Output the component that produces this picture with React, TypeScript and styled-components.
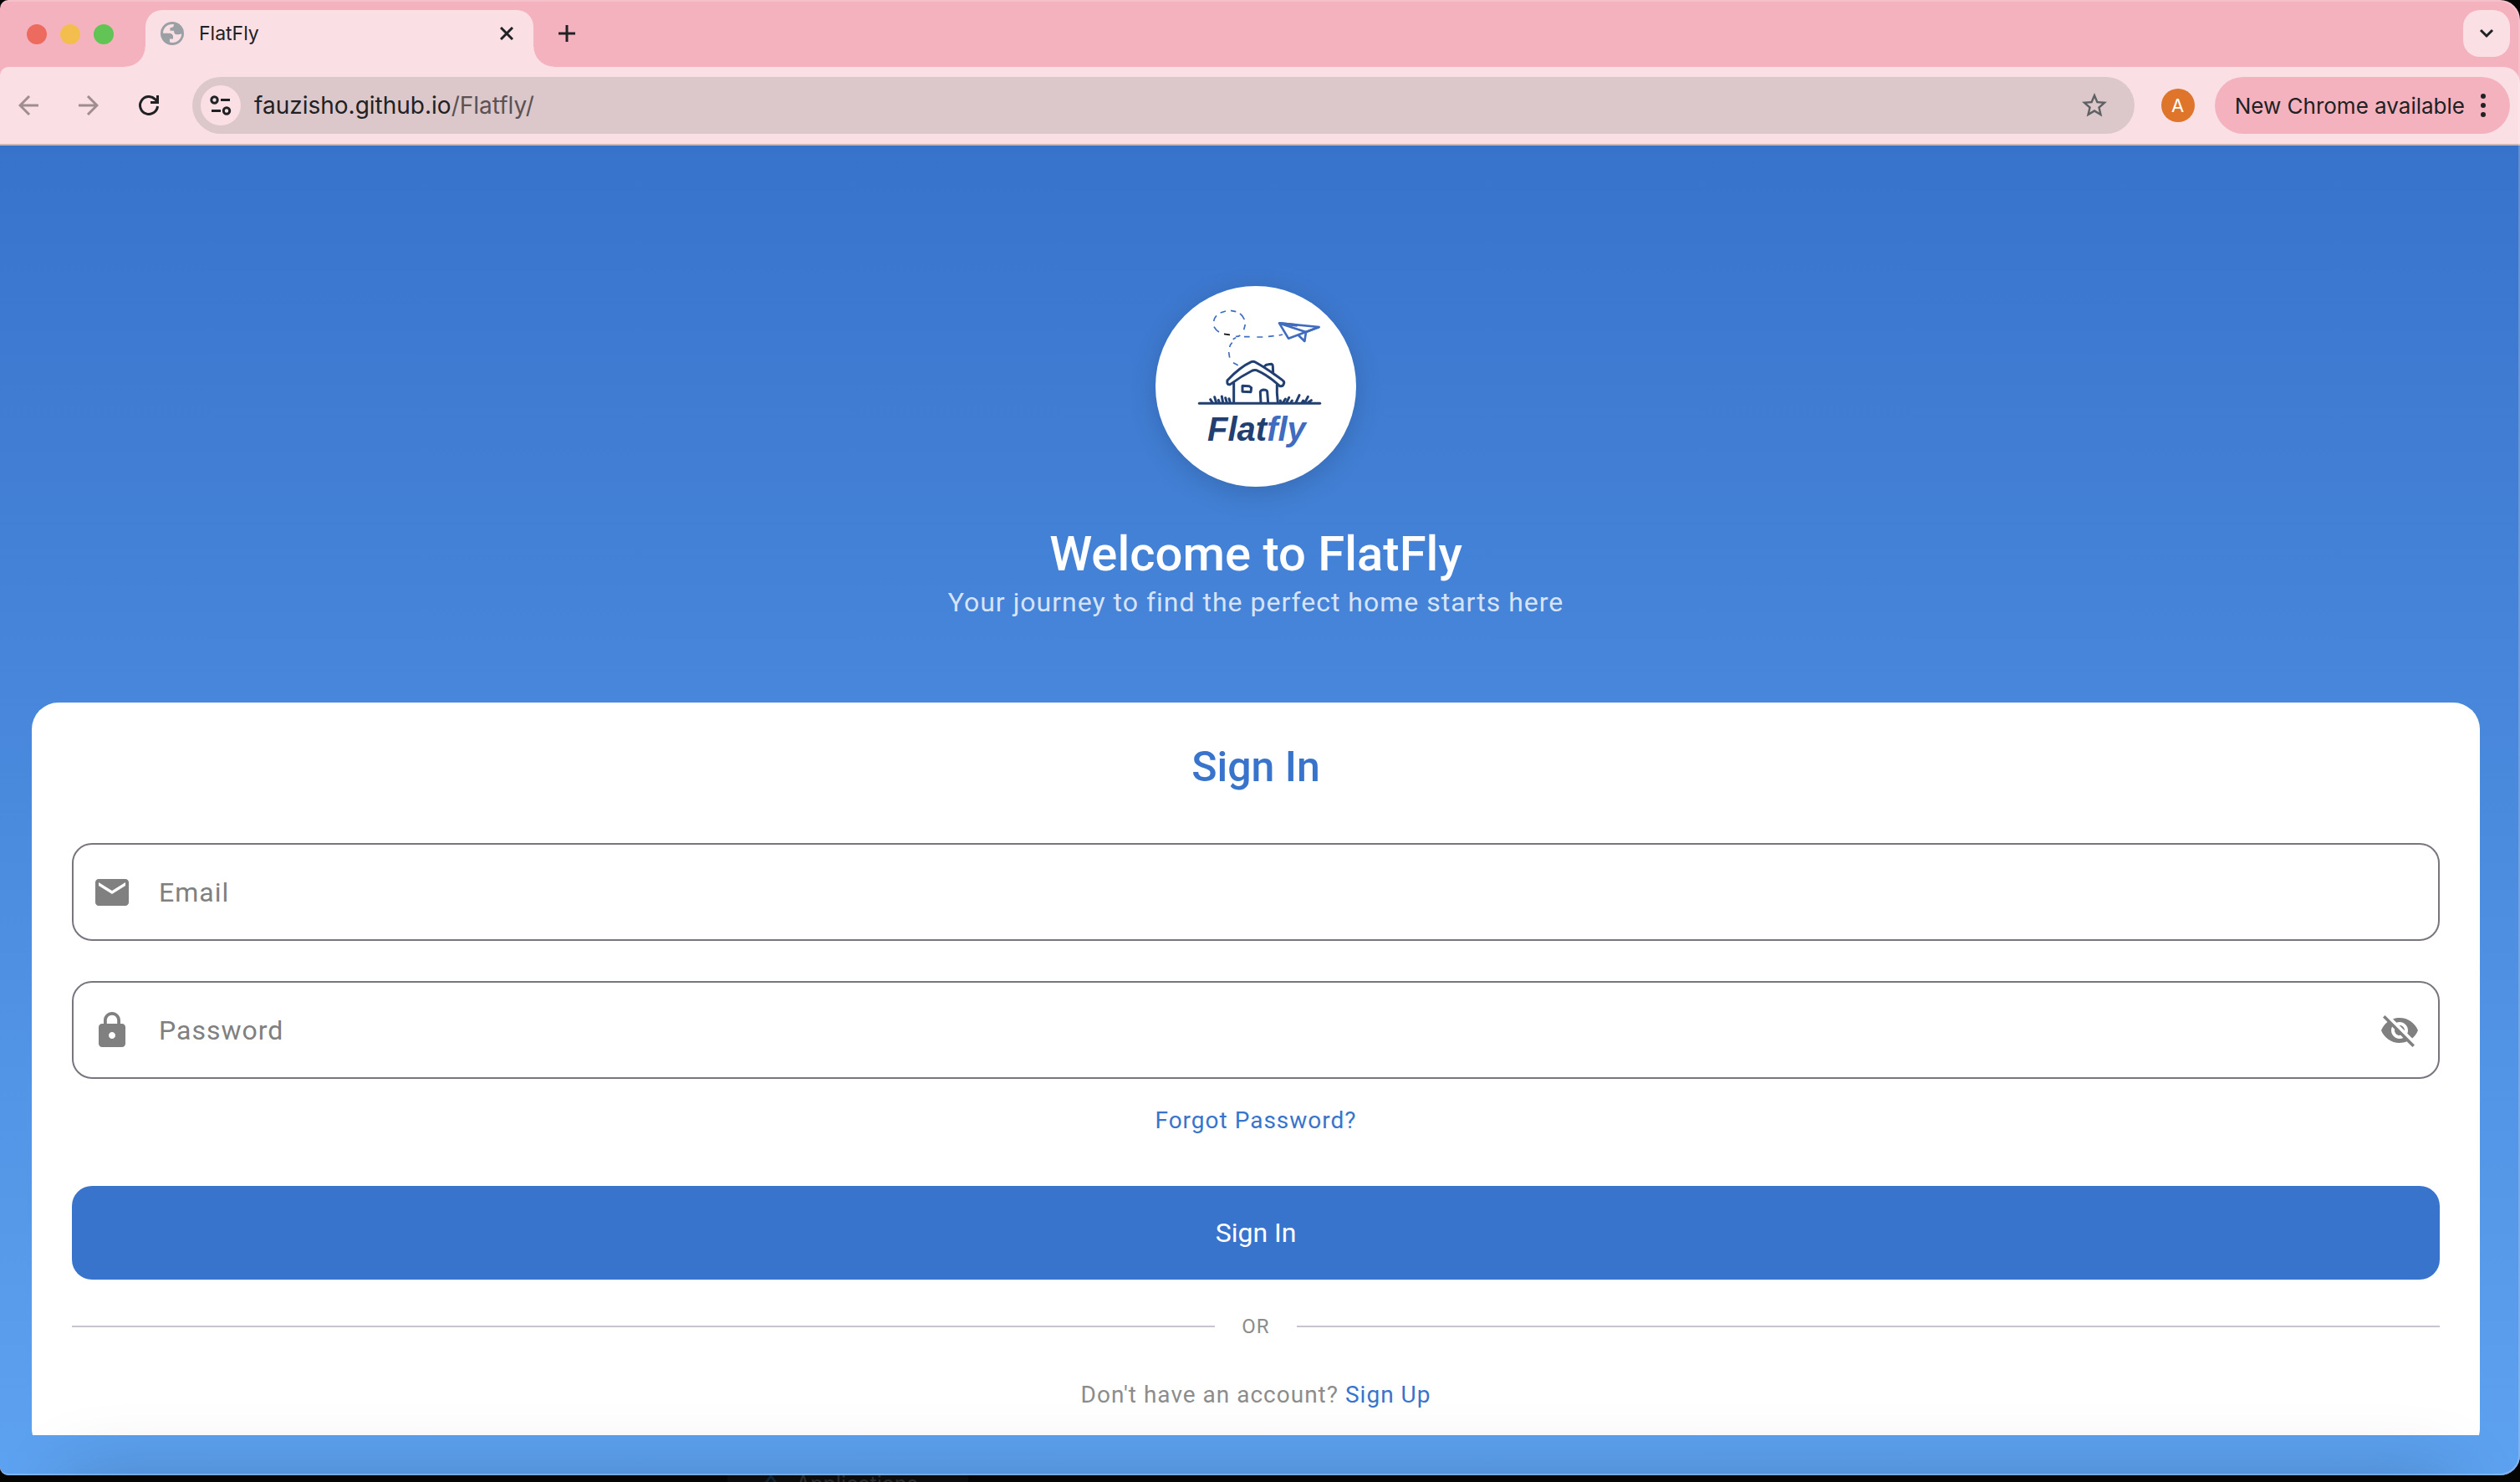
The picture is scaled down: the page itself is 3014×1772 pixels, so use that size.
import React, { useState } from "react";
import styled, { createGlobalStyle } from "styled-components";
import { MdEmail, MdLock, MdVisibilityOff, MdVisibility, MdStarBorder } from "react-icons/md";

const GlobalStyle = createGlobalStyle`
  * { box-sizing: border-box; }
  body { margin: 0; background: #050504; overflow: hidden; }
  button, input { font: inherit; border: 0; padding: 0; background: none; color: inherit; letter-spacing: inherit; }
  button { cursor: pointer; display: flex; align-items: center; justify-content: center; }
  svg { display: block; flex: none; }
`;

const Desktop = styled.div`
  height: 100vh;
  display: flex;
  flex-direction: column;
  overflow: hidden;
`;

const Window = styled.div`
  position: relative;
  flex: 1;
  min-height: 0;
  display: flex;
  flex-direction: column;
  overflow: hidden;
  border-radius: 10px 24px 24px 10px;
  background: #f4b1be;
  font-family: Inter, "Liberation Sans", sans-serif;
  color: #202124;

  &::after {
    content: "";
    position: absolute;
    inset: 0;
    border-radius: inherit;
    border: 2px solid rgba(255, 255, 255, 0.2);
    border-left: 0;
    pointer-events: none;
  }
`;

const DockShade = styled.div`
  position: absolute;
  left: 80px;
  right: 80px;
  top: 100%;
  height: 200px;
  box-shadow: 0 0 88px rgba(0, 0, 0, 0.18);
  pointer-events: none;
`;

const DesktopStrip = styled.div`
  height: 8px;
  padding-left: 870px;
  overflow: hidden;
`;

const DesktopLabel = styled.div`
  display: flex;
  gap: 22px;
  width: 288px;
  padding-left: 44px;
  background: #0c0c0c;
  color: #2b2b2b;
  font: 25px/20px Inter, sans-serif;
`;

const TabStrip = styled.div`
  height: 80px;
  display: flex;
  align-items: flex-end;
  padding: 0 12px 0 32px;
`;

const Lights = styled.div`
  display: flex;
  gap: 16px;
  width: 142px;
  height: 78px;
  align-items: center;
`;

const Light = styled.button<{ $color: string }>`
  width: 24px;
  height: 24px;
  border-radius: 50%;
  background: ${(p) => p.$color};
`;

const Tab = styled.div`
  position: relative;
  display: flex;
  align-items: center;
  width: 464px;
  height: 68px;
  padding: 0 24px 12px 18px;
  border-radius: 20px 20px 0 0;
  background: #fae0e4;
  font-size: 23px;

  &::before,
  &::after {
    content: "";
    position: absolute;
    bottom: 0;
    width: 24px;
    height: 24px;
  }
  &::before {
    right: 100%;
    background: radial-gradient(circle at 0 0, transparent 23px, #fae0e4 24px);
  }
  &::after {
    left: 100%;
    background: radial-gradient(circle at 100% 0, transparent 23px, #fae0e4 24px);
  }
`;

const TabTitle = styled.span`
  flex: 1;
  margin-left: 18px;
`;

const NewTab = styled.button`
  width: 56px;
  height: 56px;
  margin: 0 auto 12px 12px;
`;

const TabSearch = styled.button`
  width: 56px;
  height: 56px;
  margin-bottom: 12px;
  border-radius: 20px;
  background: #fae0e4;
`;

const Toolbar = styled.div`
  height: 94px;
  display: flex;
  align-items: center;
  padding: 0 12px 0 16px;
  border-radius: 10px 20px 0 0;
  border-bottom: 2px solid #cbb6bb;
  background: #fae0e4;
`;

const NavButtons = styled.div`
  display: flex;
  gap: 36px;
  width: 214px;
`;

const NavButton = styled.button<{ $dim?: boolean }>`
  width: 36px;
  height: 36px;
  color: ${(p) => (p.$dim ? "#a08d91" : "#202124")};
`;

const AddressBar = styled.div`
  flex: 1;
  display: flex;
  align-items: center;
  height: 68px;
  padding: 0 30px 0 10px;
  border-radius: 34px;
  background: #dcc7ca;
  font-size: 28px;
  color: #5b5254;
`;

const SiteInfo = styled.button`
  width: 48px;
  height: 48px;
  margin-right: 16px;
  border-radius: 50%;
  background: #fae0e4;
  color: #202124;
`;

const Url = styled.span`
  flex: 1;
`;

const Host = styled.span`
  color: #202124;
`;

const Avatar = styled.button`
  width: 40px;
  height: 40px;
  margin: 0 24px 0 32px;
  border-radius: 50%;
  background: #df742b;
  color: #fff;
  font-size: 22px;
`;

const UpdateChip = styled.button`
  height: 68px;
  padding: 0 28px 0 24px;
  gap: 18px;
  border-radius: 34px;
  background: #f4b1be;
  font-size: 26px;
  white-space: nowrap;
`;

const Page = styled.main`
  flex: 1;
  min-height: 0;
  display: flex;
  padding: 0 48px 48px 38px;
  background: linear-gradient(#3873cb, #5da2f0);
  font-family: Roboto, "Liberation Sans", sans-serif;
`;

const Scroller = styled.div`
  flex: 1;
  overflow: hidden;
  text-align: center;
`;

const Hero = styled.header`
  display: flex;
  flex-direction: column;
  align-items: center;
  padding: 168px 0 100px;
  color: #fff;
`;

const LogoDisc = styled.div`
  width: 240px;
  height: 240px;
  margin-bottom: 42px;
  border-radius: 50%;
  background: #fff;
  box-shadow: 0 8px 32px rgba(0, 0, 0, 0.15);
`;

const Welcome = styled.h1`
  margin: 0;
  font-size: 58px;
  line-height: 76px;
  font-weight: 500;
`;

const Tagline = styled.p`
  margin: 0;
  font-size: 32px;
  line-height: 40px;
  letter-spacing: 1px;
  color: rgba(255, 255, 255, 0.8);
`;

const Card = styled.form`
  padding: 48px;
  border-radius: 32px;
  background: #fff;
`;

const CardTitle = styled.h2`
  margin: 0 0 62px;
  font-size: 50px;
  line-height: 58px;
  font-weight: 500;
  color: #3874cc;
`;

const Field = styled.label`
  display: flex;
  align-items: center;
  height: 117px;
  margin-bottom: 48px;
  padding: 0 22px;
  border: 2px solid #79747e;
  border-radius: 24px;
  color: #808080;

  & + & {
    margin-bottom: 26px;
  }
`;

const FieldInput = styled.input`
  flex: 1;
  height: 100%;
  margin-left: 32px;
  font-size: 32px;
  letter-spacing: 1px;
  outline: none;
  &::placeholder {
    color: #808080;
    opacity: 1;
  }
`;

const Link = styled.a<{ $block?: boolean }>`
  display: ${(p) => (p.$block ? "block" : "inline")};
  color: #3874cc;
  text-decoration: none;
  font-size: 28px;
  line-height: 48px;
  letter-spacing: 1px;
`;

const Submit = styled.button`
  width: 100%;
  height: 112px;
  margin: 54px 0 40px;
  border-radius: 24px;
  background: #3874cc;
  color: #fff;
  font-size: 32px;
`;

const Divider = styled.div`
  display: flex;
  align-items: center;
  gap: 32px;
  margin-bottom: 42px;
  font-size: 24px;
  line-height: 32px;
  letter-spacing: 1px;
  color: #8c8c8c;

  &::before,
  &::after {
    content: "";
    flex: 1;
    height: 2px;
    background: #cac4d0;
  }
`;

const SignUpLine = styled.p`
  margin: 0;
  font-size: 28px;
  line-height: 48px;
  letter-spacing: 1px;
  color: #8c8c8c;
`;

const stroke = {
  fill: "none",
  stroke: "currentColor",
  strokeWidth: 3,
} as const;

function Globe() {
  return (
    <svg width="28" height="28" viewBox="0 0 28 28">
      <circle cx="14" cy="14" r="14" fill="#9aa0a4" />
      <path
        fill="#fae0e4"
        d="M16 3.200 C9 2 3 7 3 13.700 H11 C13.500 14 15 15.500 15 17.500 V20.500 H11 V24.500 C18 26.500 25 22 25.200 14.500 C23 15 22 15.300 19.500 15.300 C17 15 16 13.500 16 10.700 H11.500 V7 C13.500 7 16 6.500 16 3.200 Z"
      />
    </svg>
  );
}

function FlatflyLogo() {
  return (
    <svg width="240" height="240" viewBox="66 66 720 720" role="img" aria-label="Flatfly">
      <g fill="none" stroke="#3f6cbf" strokeWidth="5" strokeLinecap="butt">
        <path d="M275 192 Q277 180 285 172 M299 162 L318 156 M336 154 L355 158 M369 165 Q380 172 385 186 M388 204 L383 223 M276 212 Q282 224 294 231 M354 247 Q362 248 370 243 M384 248 H404 M430 249 H451 M471 247 L491 245 M509 243 L522 240 M354 251 L344 257 M341 269 Q334 276 332 285 M329 303 L332 323 M345 341 L362 350" />
        <path stroke="#111" d="M312 238 L333 241" />
        <g strokeWidth="8" strokeLinejoin="round">
          <path d="M510 199 L653 213 L543 254 Z" />
          <path d="M512 200 L606 231 L653 213 M606 231 L601 264 L576 240" />
        </g>
        <path strokeWidth="10" d="M512 200 L575 207" />
      </g>
      <g fill="none" stroke="#213f70" strokeWidth="9" strokeLinecap="round" strokeLinejoin="round">
        <path d="M324 404 Q370 356 410 338 Q417 335 424 339 Q466 362 522 404 Q530 409 526 417 Q524 427 512 425 Q470 386 428 368 Q421 366 414 369 Q374 389 334 419 Q321 422 324 404 Z" />
        <path d="M347 414 V484 M502 420 V450 L505 484 M457 354 Q462 347 470 347 L483 346 Q487 348 487 354 L488 376" />
        <path d="M378 424 L402 425 L410 431 L408 446 L378 445 Z" />
        <path d="M444 484 L442 446 Q444 439 453 438 Q466 438 467 445 L470 484" />
        <path d="M223 487 H656" />
        <path d="M270 484 L263 473 M284 484 L278 464 M295 484 L292 475 M308 484 L304 462 M322 484 L317 467 M334 484 L330 470 M516 484 L514 477 M524 484 L532 471 M536 484 L545 466 M552 484 L556 477 M570 484 L582 458 M592 484 L596 477 M602 484 L613 463 M614 484 L625 476" />
      </g>
      <text
        x="252"
        y="620"
        fontFamily="Liberation Sans, Arial, sans-serif"
        fontSize="120"
        fontWeight="700"
        fontStyle="italic"
        fill="#213f70"
      >
        Flat<tspan fill="#3f6cbf">fly</tspan>
      </text>
    </svg>
  );
}

function BrowserChrome() {
  return (
    <>
      <TabStrip>
        <Lights>
          <Light $color="#ed6a5e" aria-label="Close window" />
          <Light $color="#f4be4f" aria-label="Minimize window" />
          <Light $color="#61c454" aria-label="Zoom window" />
        </Lights>
        <Tab>
          <Globe />
          <TabTitle>FlatFly</TabTitle>
          <button aria-label="Close tab">
            <svg width="16" height="16" viewBox="0 0 16 16" {...stroke}>
              <path d="M1 1 15 15M15 1 1 15" />
            </svg>
          </button>
        </Tab>
        <NewTab aria-label="New tab">
          <svg width="20" height="20" viewBox="0 0 20 20" {...stroke}>
            <path d="M10 0V20M0 10H20" />
          </svg>
        </NewTab>
        <TabSearch aria-label="Search tabs">
          <svg width="18" height="12" viewBox="0 0 18 12" {...stroke}>
            <path d="M2 2 9 9 16 2" />
          </svg>
        </TabSearch>
      </TabStrip>
      <Toolbar>
        <NavButtons>
          <NavButton $dim aria-label="Back">
            <svg width="24" height="24" viewBox="0 0 24 24" {...stroke}>
              <path d="M24 12H2M13 1 2 12 13 23" />
            </svg>
          </NavButton>
          <NavButton $dim aria-label="Forward">
            <svg width="24" height="24" viewBox="0 0 24 24" {...stroke}>
              <path d="M0 12H22M11 1 22 12 11 23" />
            </svg>
          </NavButton>
          <NavButton aria-label="Reload">
            <svg width="24" height="24" viewBox="0 0 24 24" {...stroke}>
              <path d="M22.500 13A10.500 10.500 0 1 1 19.500 4.600L22 7.500M22.500 0V8.500H14" />
            </svg>
          </NavButton>
        </NavButtons>
        <AddressBar>
          <SiteInfo aria-label="Site information">
            <svg width="26" height="24" viewBox="0 0 26 24" {...stroke}>
              <circle cx="5.500" cy="5.500" r="3.700" />
              <circle cx="20" cy="18.500" r="3.700" />
              <path d="M13 5.500H24M2 18.500H13" />
            </svg>
          </SiteInfo>
          <Url>
            <Host>fauzisho.github.io</Host>/Flatfly/
          </Url>
          <button aria-label="Bookmark this page">
            <MdStarBorder size={36} color="#5f6064" />
          </button>
        </AddressBar>
        <Avatar>A</Avatar>
        <UpdateChip>
          New Chrome available
          <svg width="8" height="30" viewBox="0 0 8 30" fill="currentColor">
            <circle cx="4" cy="4" r="3" />
            <circle cx="4" cy="15" r="3" />
            <circle cx="4" cy="26" r="3" />
          </svg>
        </UpdateChip>
      </Toolbar>
    </>
  );
}

export default function App() {
  const [visible, setVisible] = useState(false);
  return (
    <Desktop>
      <GlobalStyle />
      <Window>
        <BrowserChrome />
        <Page>
          <Scroller>
            <Hero>
              <LogoDisc>
                <FlatflyLogo />
              </LogoDisc>
              <Welcome>Welcome to FlatFly</Welcome>
              <Tagline>Your journey to find the perfect home starts here</Tagline>
            </Hero>
            <Card onSubmit={(e) => e.preventDefault()}>
              <CardTitle>Sign In</CardTitle>
              <Field>
                <MdEmail size={48} />
                <FieldInput type="email" placeholder="Email" aria-label="Email" />
              </Field>
              <Field>
                <MdLock size={48} />
                <FieldInput
                  type={visible ? "text" : "password"}
                  placeholder="Password"
                  aria-label="Password"
                />
                <button type="button" aria-label="Show password" onClick={() => setVisible(!visible)}>
                  {visible ? <MdVisibility size={48} /> : <MdVisibilityOff size={48} />}
                </button>
              </Field>
              <Link $block href="#forgot">
                Forgot Password?
              </Link>
              <Submit type="submit">Sign In</Submit>
              <Divider>OR</Divider>
              <SignUpLine>
                Don't have an account? <Link href="#signup">Sign Up</Link>
              </SignUpLine>
            </Card>
          </Scroller>
        </Page>
        <DockShade />
      </Window>
      <DesktopStrip>
        <DesktopLabel>
          <svg width="16" height="8" viewBox="0 0 16 8" fill="none" stroke="#0d2436" strokeWidth="3">
            <path d="M2 9 8 1 14 9" />
          </svg>
          Applications
        </DesktopLabel>
      </DesktopStrip>
    </Desktop>
  );
}
